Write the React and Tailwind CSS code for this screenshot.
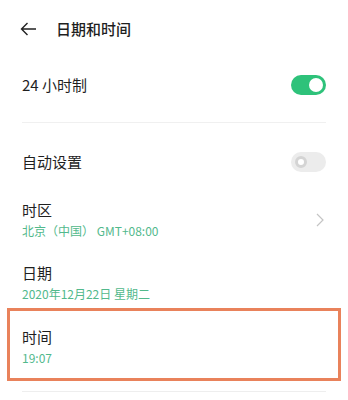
import React from "react";

const font = { fontFamily: '"Noto Sans CJK SC", "Noto Sans", sans-serif' };

const Toggle = ({ on }) =>
  on ? (
    <div className="w-[35px] h-[20px] rounded-full bg-[#2ec27a] flex items-center justify-end pr-[3px]">
      <div className="w-[14px] h-[14px] rounded-full bg-white" />
    </div>
  ) : (
    <div className="w-[35px] h-[20px] rounded-full bg-[#ececec] flex items-center pl-[4px]">
      <div className="w-[12px] h-[12px] rounded-full border-[3px] border-[#d4d4d4] bg-white" />
    </div>
  );

const Item = ({ title, value, chevron, className = "" }) => (
  <div className={`flex items-center justify-between px-[22px] ${className}`}>
    <div className="flex flex-col">
      <span className="text-[15px] leading-[18px] text-[#1f1f1f]">{title}</span>
      <span className="mt-[4px] text-[12px] leading-[16px] text-[#52b98c]">{value}</span>
    </div>
    {chevron && (
      <svg width="8" height="14" viewBox="0 0 8 14" className="mr-[2px]">
        <path d="M1 1l6 6-6 6" fill="none" stroke="#c4c4c4" strokeWidth="1.2" />
      </svg>
    )}
  </div>
);

export default function App() {
  return (
    <div className="w-[348px] h-[400px] bg-white overflow-hidden" style={font}>
      <div className="h-[58px] flex items-center px-[20px]">
        <svg width="17" height="14" viewBox="0 0 17 14">
          <path d="M16 7H1.5M7.5 1L1.5 7l6 6" fill="none" stroke="#222" strokeWidth="1.4" />
        </svg>
        <span className="ml-[19px] text-[15px] font-medium text-[#1f1f1f]">日期和时间</span>
      </div>

      <div className="h-[54px] flex items-center justify-between pl-[22px] pr-[22px]">
        <span className="text-[15px] text-[#1f1f1f]">24 小时制</span>
        <Toggle on />
      </div>

      <div className="mt-[10px] mx-[22px] h-px bg-[#f0f0f0]" />

      <div className="h-[78px] flex items-center justify-between px-[22px]">
        <span className="text-[15px] text-[#1f1f1f]">自动设置</span>
        <Toggle />
      </div>

      <Item title="时区" value="北京（中国） GMT+08:00" chevron />
      <Item title="日期" value="2020年12月22日 星期二" className="mt-[25px]" />
      <div className="relative mt-[26px]">
        <Item title="时间" value="19:07" />
        <div className="absolute left-[7px] right-[7px] top-[-20px] bottom-[-15px] border-[3px] border-[#e9825b]" />
      </div>

      <div className="mt-[25px] mx-[22px] h-px bg-[#eeeeee]" />
    </div>
  );
}
